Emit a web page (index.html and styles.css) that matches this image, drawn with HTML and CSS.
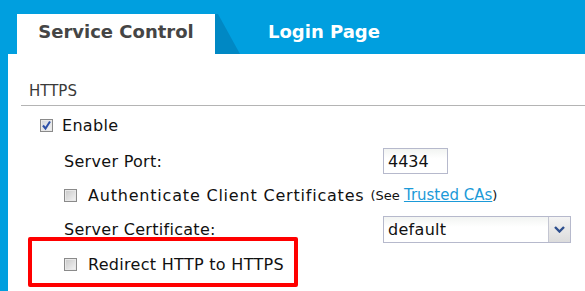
FILE: index.html
```html
<!DOCTYPE html>
<html lang="en">
<head>
    <meta charset="UTF-8">
    <title>HTTPS - Service Control</title>
    <link rel="stylesheet" href="styles.css">
</head>
<body>
    <div class="page">
        <div class="tabbar">
            <div class="tab active">Service Control</div>
            <div class="tab">Login Page</div>
        </div>

        <div class="content">
            <div class="section-title">HTTPS</div>

            <div class="row level-1">
                <span class="check checked">
                    <svg width="11" height="11" viewBox="0 0 11 11"><path d="M2 5.5 L4.5 8.5 L9 1.5" fill="none" stroke="#2b4fa8" stroke-width="2"/></svg>
                </span>
                <span class="text">Enable</span>
            </div>

            <div class="row level-2">
                <span class="label">Server Port:</span>
                <div class="textbox">4434</div>
            </div>

            <div class="row level-2">
                <span class="check"></span>
                <span class="text wide">Authenticate Client Certificates</span>
                <span class="note">(See <a href="#">Trusted CAs</a>)</span>
            </div>

            <div class="row level-2">
                <span class="label">Server Certificate:</span>
                <div class="select">
                    <span class="select-value">default</span>
                    <span class="select-btn">
                        <svg width="11" height="7" viewBox="0 0 11 7"><path d="M1 1 L5.5 5.5 L10 1" fill="none" stroke="#2e4f8e" stroke-width="2.4"/></svg>
                    </span>
                </div>
            </div>

            <div class="row level-2 last">
                <span class="check"></span>
                <span class="text">Redirect HTTP to HTTPS</span>
            </div>

            <!-- highlight marker -->
            <div class="highlight"></div>
        </div>
    </div>
</body>
</html>
```

FILE: styles.css
```css
* {
    margin: 0;
    padding: 0;
    box-sizing: border-box;
}

body {
    font-family: "DejaVu Sans", sans-serif;
    background: #009fdf;
    width: 585px;
    height: 291px;
    overflow: hidden;
}

.page {
    display: flex;
    flex-direction: column;
    height: 291px;
}

.tabbar {
    display: flex;
    height: 54px;
    padding: 14px 0 0 17px;
}

.tab {
    height: 40px;
    padding: 7px 0 0 28px;
    font-size: 18px;
    font-weight: bold;
    color: #fff;
}

.tab.active {
    position: relative;
    width: 198px;
    padding-left: 0;
    margin-right: 25px;
    background: #fff;
    color: #454545;
    text-align: center;
}

/* shadow wedge to the right of the active tab */
.tab.active::after {
    content: "";
    position: absolute;
    top: 0;
    left: 198px;
    width: 25px;
    height: 40px;
    background: #0088c4;
    clip-path: polygon(0 0, 3px 0, 100% 100%, 0 100%);
}

.content {
    position: relative;
    flex: 1;
    margin-left: 8px;
    padding-left: 13px;
    background: #fff;
    color: #111;
}

.section-title {
    height: 52px;
    display: flex;
    align-items: flex-end;
    padding: 0 0 5px 8px;
    border-bottom: 1px solid #b4b4b4;
    font-size: 15px;
    color: #3a3a3a;
}

.row {
    display: flex;
    align-items: center;
    font-size: 16px;
    letter-spacing: 0.3px;
}

.row.level-1 {
    height: 38px;
    padding-left: 19px;
}

.row.level-2 {
    height: 34px;
    padding-left: 43px;
}

.row.last {
    height: 36px;
}

.text.wide {
    letter-spacing: 0.8px;
}

.check {
    width: 13px;
    height: 13px;
    border: 1px solid #8a8a8a;
    background: linear-gradient(135deg, #c8c8c8 0%, #f4f4f4 100%);
    box-shadow: inset 0 0 0 1px #e8e8e8;
    margin-right: 11px;
    display: flex;
    align-items: center;
    justify-content: center;
    flex-shrink: 0;
}

.check.checked {
    background: linear-gradient(135deg, #d0d4dc 0%, #f4f4f4 100%);
    margin-right: 9px;
}

.label {
    width: 319px;
}

.textbox {
    width: 65px;
    height: 26px;
    border: 1px solid #b6b9cc;
    background: linear-gradient(#f2f4f2 0%, #fff 40%);
    padding: 3px 4px;
    letter-spacing: 0;
}

.note {
    font-size: 13px;
    letter-spacing: 0;
    margin-left: 6px;
}

.note a {
    color: #1b9ad8;
    font-size: 15px;
}

.select {
    display: flex;
    width: 188px;
    height: 27px;
    border: 1px solid #b6b9cc;
    background: linear-gradient(#f2f4f2 0%, #fff 40%);
}

.select-value {
    flex: 1;
    padding: 3px 4px;
}

.select-btn {
    width: 22px;
    border-left: 1px solid #c4c6d2;
    background: linear-gradient(#f4f4f4, #dcdcdc);
    display: flex;
    align-items: center;
    justify-content: center;
}

.highlight {
    position: absolute;
    left: 20px;
    top: 183px;
    width: 270px;
    height: 50px;
    border: 4px solid #ff0000;
    border-radius: 2px;
}
```
